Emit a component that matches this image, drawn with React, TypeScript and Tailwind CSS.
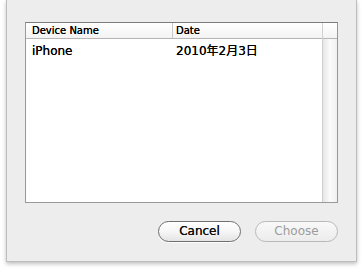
import React from "react";

const font = { fontFamily: '"DejaVu Sans", "Noto Sans CJK JP", sans-serif' };

export default function App() {
  return (
    <div className="w-[364px] h-[272px] bg-white" style={font}>
      <div className="ml-[6px] w-[351px] h-[262px] bg-[#ededed] border-x border-b border-[#bdbdbd] shadow-[0_2px_4px_rgba(0,0,0,0.25)] pl-[18px] pr-[18px] pt-[22px] flex flex-col">
        {/* table box */}
        <div className="w-[313px] h-[181px] bg-white border border-[#9a9a9a] border-t-[#7c7c7c] border-r-[#8f989c] flex shadow-[inset_0_1px_1px_rgba(0,0,0,0.15)]">
          <div className="flex-1 flex flex-col">
            <div className="h-[16px] flex border-b border-[#b5b5b5] bg-gradient-to-b from-white to-[#f3f3f3] text-[10px] leading-[15px] text-black [text-shadow:0_0_0.3px_#000]">
              <div className="w-[147px] pl-[6px] border-r border-[#c8c8c8]">Device Name</div>
              <div className="flex-1 pl-[3px]">Date</div>
            </div>
            <div className="h-[21px] flex items-center text-[12px] text-black mt-[1px] [text-shadow:0_0_0.3px_#000]">
              <div className="w-[147px] pl-[6px]">iPhone</div>
              <div className="flex-1 pl-[3px]">2010年2月3日</div>
            </div>
          </div>
          <div className="w-[15px] flex flex-col border-l border-[#d0d0d0]">
            <div className="h-[16px] border-b border-[#b5b5b5] bg-gradient-to-b from-white to-[#f3f3f3]" />
            <div className="flex-1 bg-gradient-to-r from-[#e6e6e6] via-[#fbfbfb] to-[#f0f0f0]" />
          </div>
        </div>
        {/* buttons */}
        <div className="w-[313px] mt-[18px] flex justify-end gap-[14px]">
          <button className="w-[83px] h-[21px] rounded-full border border-[#6f6f6f] bg-gradient-to-b from-white via-[#f6f6f6] to-[#e4e4e4] text-[12px] leading-[19px] text-[#111] [text-shadow:0_0_0.3px_#000] shadow-[0_1px_0_rgba(255,255,255,0.8)]">
            Cancel
          </button>
          <button className="w-[83px] h-[21px] rounded-full border border-[#b9b9b9] bg-gradient-to-b from-[#f9f9f9] to-[#ececec] text-[12px] leading-[19px] text-[#9c9c9c]">
            Choose
          </button>
        </div>
      </div>
    </div>
  );
}
